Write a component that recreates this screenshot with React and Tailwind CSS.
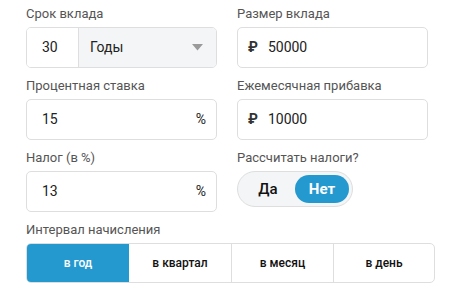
import React from "react";

const font = { fontFamily: "Roboto, 'Noto Sans', sans-serif" };

function Label({ children }) {
  return (
    <div className="text-[13px] leading-[16px] text-[#555] mb-[5px] h-[16px] whitespace-nowrap">
      {children}
    </div>
  );
}

function Box({ children, className = "" }) {
  return (
    <div
      className={
        "h-[41px] w-[191px] rounded-[5px] border border-[#dedede] bg-white flex items-center " +
        className
      }
    >
      {children}
    </div>
  );
}

export default function App() {
  return (
    <div className="bg-white w-[450px] h-[295px] pl-[26px] pt-[6px]" style={font}>
      <div className="grid grid-cols-[191px_191px] gap-x-[20px] gap-y-[10px]">
        <div>
          <Label>Срок вклада</Label>
          <div className="h-[41px] w-[191px] rounded-[5px] border border-[#dedede] flex overflow-hidden">
            <div className="w-[52px] bg-white flex items-center pl-[15px] text-[14px] text-[#222] border-r border-[#dedede]">
              30
            </div>
            <div className="flex-1 bg-[#f4f5f7] flex items-center justify-between pl-[11px] pr-[13px] text-[14px] text-[#222]">
              <span>Годы</span>
              <svg width="11" height="7" viewBox="0 0 11 7">
                <path d="M0 0 L11 0 L5.5 6.5 Z" fill="#9a9a9a" />
              </svg>
            </div>
          </div>
        </div>
        <div>
          <Label>Размер вклада</Label>
          <Box className="pl-[10px] text-[14px] text-[#222]">
            <span className="font-bold text-[14px] text-[#333] mr-[10px]">₽</span>
            <span>50000</span>
          </Box>
        </div>

        <div>
          <Label>Процентная ставка</Label>
          <Box className="pl-[15px] pr-[10px] justify-between text-[14px] text-[#222]">
            <span>15</span>
            <span className="text-[14px]">%</span>
          </Box>
        </div>
        <div>
          <Label>Ежемесячная прибавка</Label>
          <Box className="pl-[10px] text-[14px] text-[#222]">
            <span className="font-bold text-[14px] text-[#333] mr-[10px]">₽</span>
            <span>10000</span>
          </Box>
        </div>

        <div>
          <Label>Налог (в %)</Label>
          <Box className="pl-[15px] pr-[10px] justify-between text-[14px] text-[#222]">
            <span>13</span>
            <span className="text-[14px]">%</span>
          </Box>
        </div>
        <div>
          <Label>Рассчитать налоги?</Label>
          <div className="mt-[5px] h-[36px] w-[116px] rounded-full border border-[#dedede] bg-[#f4f5f7] p-[3px] flex">
            <div className="w-[54px] h-full flex items-center justify-center text-[15px] font-medium text-[#111]">
              Да
            </div>
            <div className="w-[54px] h-full rounded-full bg-[#2399cf] flex items-center justify-center text-[15px] font-bold text-white">
              Нет
            </div>
          </div>
        </div>
      </div>

      <div className="mt-[10px]">
        <Label>Интервал начисления</Label>
        <div className="w-[409px] h-[40px] rounded-[5px] border border-[#dedede] flex overflow-hidden text-[12px] font-medium text-[#111]">
          <div className="w-[102px] bg-[#2399cf] text-white flex items-center justify-center">в год</div>
          <div className="w-[102px] flex items-center justify-center">в квартал</div>
          <div className="w-[102px] border-l border-[#dedede] flex items-center justify-center">в месяц</div>
          <div className="flex-1 border-l border-[#dedede] flex items-center justify-center">в день</div>
        </div>
      </div>
    </div>
  );
}
